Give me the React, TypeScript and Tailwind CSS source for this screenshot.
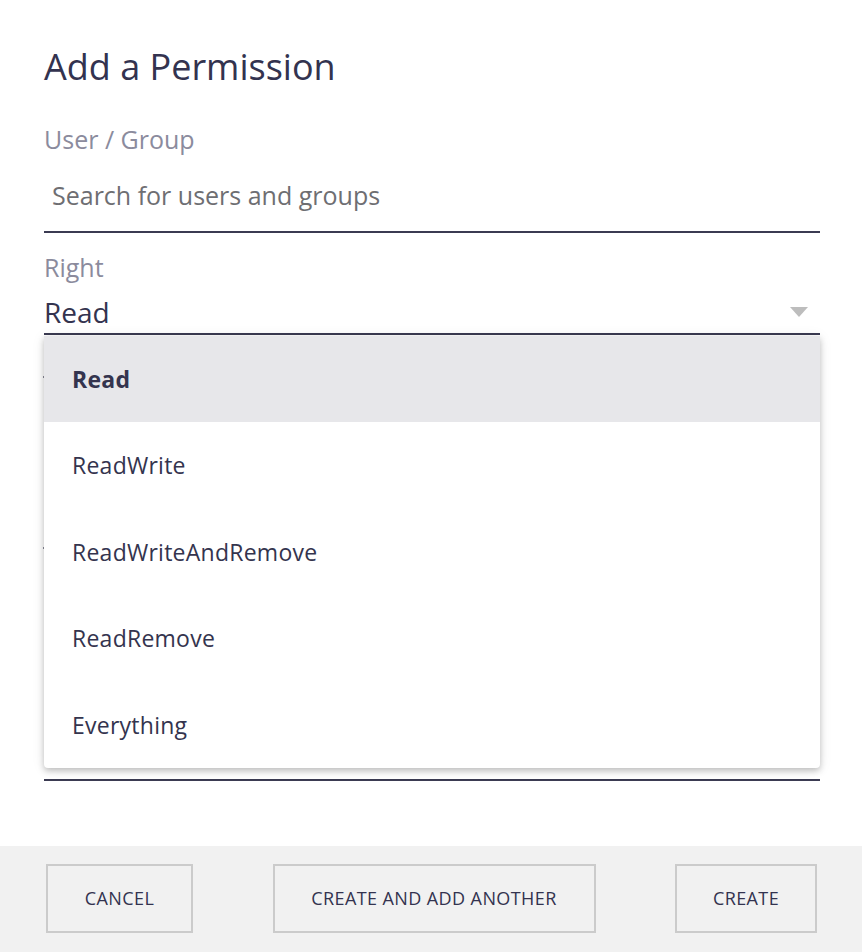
import React from "react";

const OPTIONS = ["Read", "ReadWrite", "ReadWriteAndRemove", "ReadRemove", "Everything"];

function RightMenu({ selected }: { selected: string }) {
  return (
    <ul className="absolute left-[44px] top-[336px] w-[776px] rounded-b-[4px] bg-white shadow-[0_3px_6px_rgba(0,0,0,0.22),0_1px_14px_rgba(0,0,0,0.08)]">
      {OPTIONS.map((opt) => (
        <li
          key={opt}
          className={
            opt === selected
              ? "flex h-[86.4px] items-center bg-[#e7e7ea] px-[28px] text-[23px] font-bold tracking-[0.25px] text-[#34344e]"
              : "flex h-[86.4px] items-center px-[28px] text-[23px] tracking-[0.25px] text-[#34344e]"
          }
        >
          {opt}
        </li>
      ))}
    </ul>
  );
}

export default function App() {
  return (
    <div
      className="relative flex h-[952px] w-[862px] flex-col bg-white"
      style={{ fontFamily: '"Open Sans", "Noto Sans", sans-serif' }}
    >
      <div className="flex-1 px-[44px] pr-[42px] pt-[43px]">
        <h1 className="text-[36px] leading-[48px] text-[#33334f]">Add a Permission</h1>

        <label className="mt-[32px] block text-[25px] leading-[32px] text-[#8b8b9d]">User / Group</label>
        <div className="mt-[24px] border-b-2 border-[#3b3b52] pb-[20px] pl-[8px] text-[25px] leading-[32px] text-[#6e6e72]">
          Search for users and groups
        </div>

        <label className="mt-[18px] block text-[25px] leading-[32px] text-[#8b8b9d]">Right</label>
        <div className="mt-[11px] flex items-center justify-between border-b-2 border-[#3b3b52] pb-[3px] text-[28px] leading-[36px] text-[#33334f]">
          <span>Read</span>
          <svg width="18" height="10" viewBox="0 0 18 10" className="mr-[12px]">
            <path d="M0 0h18L9 10z" fill="#bdbdbd" />
          </svg>
        </div>

        {/* fields hidden behind the open menu */}
        <div className="-ml-px mt-[41px] h-[2px] bg-[#8a8a98]" />
        <div className="-ml-px mt-[169px] h-[2px] bg-[#8a8a98]" />
        <div className="mt-[230px] h-[2px] bg-[#3b3b52]" />
      </div>

      <footer className="flex h-[106px] items-start justify-between bg-[#f1f1f1] pl-[46px] pr-[45px] pt-[18px]">
        <button className="h-[69px] w-[147px] border-2 border-[#cbcbcb] text-[18px] uppercase tracking-[0.4px] text-[#33334f]">
          Cancel
        </button>
        <button className="h-[69px] w-[323px] border-2 border-[#cbcbcb] text-[18px] uppercase tracking-[0.4px] text-[#33334f]">
          Create and add another
        </button>
        <button className="h-[69px] w-[142px] border-2 border-[#cbcbcb] text-[18px] uppercase tracking-[0.4px] text-[#33334f]">
          Create
        </button>
      </footer>

      <RightMenu selected="Read" />
    </div>
  );
}
